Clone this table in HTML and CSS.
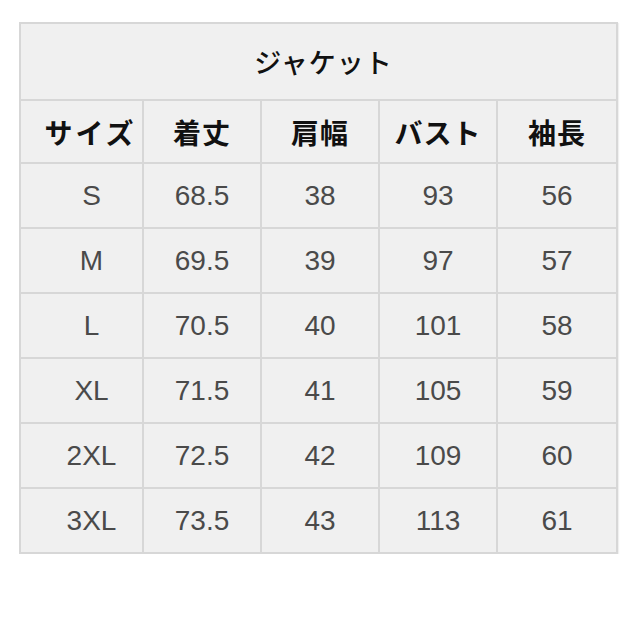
FILE: index.html
```html
<!DOCTYPE html>
<html lang="ja">
<head>
<meta charset="utf-8">
<link rel="stylesheet" href="styles.css">
</head>
<body>
<div class="size-table">
  <div class="cell title">ジャケット</div>
  <div class="cell head first">サイズ</div>
  <div class="cell head">着丈</div>
  <div class="cell head">肩幅</div>
  <div class="cell head">バスト</div>
  <div class="cell head">袖長</div>

  <div class="cell num first">S</div><div class="cell num">68.5</div><div class="cell num">38</div><div class="cell num">93</div><div class="cell num">56</div>
  <div class="cell num first">M</div><div class="cell num">69.5</div><div class="cell num">39</div><div class="cell num">97</div><div class="cell num">57</div>
  <div class="cell num first">L</div><div class="cell num">70.5</div><div class="cell num">40</div><div class="cell num">101</div><div class="cell num">58</div>
  <div class="cell num first">XL</div><div class="cell num">71.5</div><div class="cell num">41</div><div class="cell num">105</div><div class="cell num">59</div>
  <div class="cell num first">2XL</div><div class="cell num">72.5</div><div class="cell num">42</div><div class="cell num">109</div><div class="cell num">60</div>
  <div class="cell num first">3XL</div><div class="cell num">73.5</div><div class="cell num">43</div><div class="cell num">113</div><div class="cell num">61</div>
</div>
</body>
</html>
```
FILE: styles.css
```css
html, body {
  margin: 0;
  padding: 0;
  background: #ffffff;
}
body {
  padding: 22px 0 0 19px;
}
.size-table {
  display: grid;
  grid-template-columns: 121px 116px 116px 116px 118px;
  grid-template-rows: 75px 61px repeat(6, 63px);
  gap: 2px;
  padding: 2px;
  width: max-content;
  background: #d7d7d7;
  box-shadow: 1px 1px 1px rgba(0,0,0,0.06);
}
.cell {
  background: #f0f0f0;
  display: flex;
  align-items: center;
  justify-content: center;
}
.title {
  grid-column: 1 / -1;
  padding-left: 10px;
  font-family: "Noto Sans CJK JP", sans-serif;
  font-size: 27px;
  font-weight: 500;
  color: #111;
  letter-spacing: 1px;
}
.head {
  font-family: "Noto Sans CJK JP", sans-serif;
  font-size: 28px;
  font-weight: 700;
  color: #111;
  letter-spacing: 1px;
}
.num {
  font-family: "Liberation Sans", Arial, sans-serif;
  font-size: 28px;
  color: #4a4a4a;
}
.first {
  padding-left: 20px;
}
.head.first {
  padding-left: 18px;
  letter-spacing: 3px;
}
```
